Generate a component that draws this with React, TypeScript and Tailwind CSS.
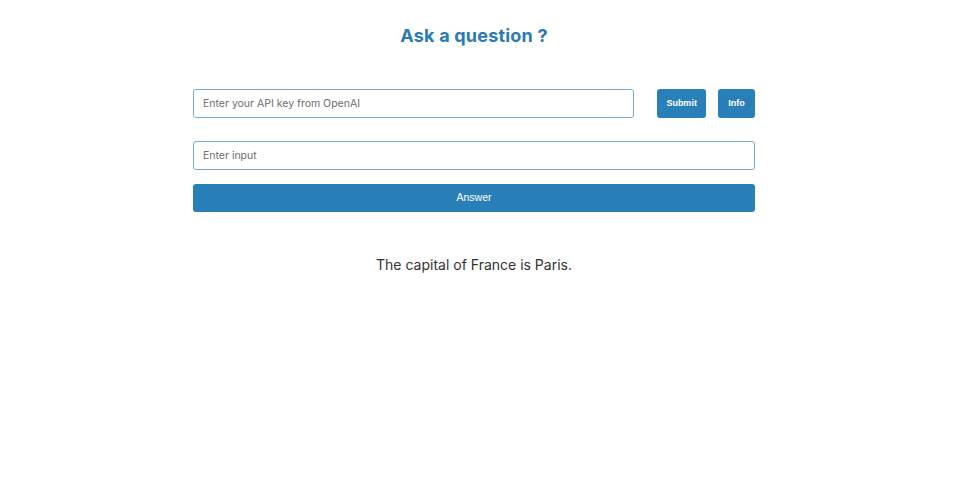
import { useState } from "react";

export default function App() {
  const [apiKey, setApiKey] = useState("");
  const [input, setInput] = useState("");
  const answer = "The capital of France is Paris.";

  return (
    <div className="min-h-[500px] w-full bg-white" style={{ fontFamily: "Inter, 'Noto Sans', sans-serif" }}>
      <div className="w-[948px] flex flex-col items-center pt-[22px]">
        <h1 className="text-[18px] leading-[28px] font-bold text-[#2a7ab6] tracking-[0.2px]">Ask a question ?</h1>

        <div className="w-[562px] mt-[39px]">
          {/* API key row */}
          <div className="flex items-center">
            <input
              type="text"
              value={apiKey}
              onChange={(e) => setApiKey(e.target.value)}
              placeholder="Enter your API key from OpenAI"
              className="w-[442px] h-[29px] rounded-[3px] border border-[#74acd8] px-[9px] text-[10.5px] text-gray-800 placeholder:text-[#6b6f73] focus:outline-none"
            />
            <button
              className="ml-[23px] w-[49px] h-[29px] rounded-[3px] bg-[#2980b9] text-white text-[9px] font-semibold"
              style={{ fontFamily: "'Liberation Sans', Arial, sans-serif" }}
            >
              Submit
            </button>
            <button
              className="ml-[12px] w-[37px] h-[29px] rounded-[3px] bg-[#2980b9] text-white text-[9px] font-semibold"
              style={{ fontFamily: "'Liberation Sans', Arial, sans-serif" }}
            >
              Info
            </button>
          </div>

          {/* question */}
          <input
            type="text"
            value={input}
            onChange={(e) => setInput(e.target.value)}
            placeholder="Enter input"
            className="mt-[23px] w-full h-[29px] rounded-[3px] border border-[#74acd8] px-[9px] text-[10.5px] text-gray-800 placeholder:text-[#6b6f73] focus:outline-none"
          />
          <button
            className="mt-[14px] w-full h-[28px] rounded-[3px] bg-[#2980b9] text-white text-[10.5px]"
            style={{ fontFamily: "'Liberation Sans', Arial, sans-serif" }}
          >
            Answer
          </button>
        </div>

        <p className="mt-[42px] text-[14px] text-[#333]">{answer}</p>
      </div>
    </div>
  );
}
